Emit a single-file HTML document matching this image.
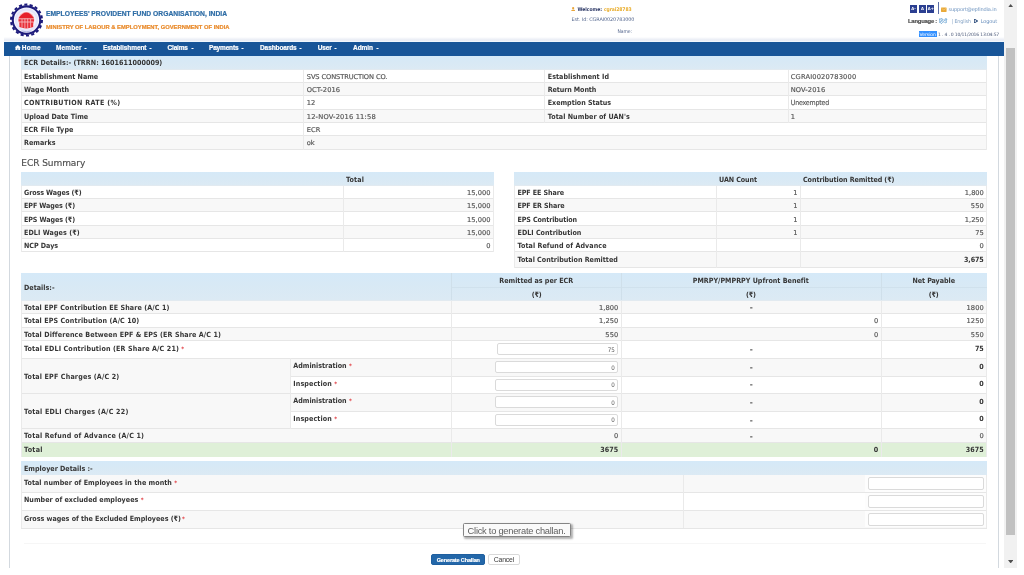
<!DOCTYPE html>
<html lang="en"><head><meta charset="utf-8"><title>EPFO - ECR Challan</title>
<style>
*{box-sizing:border-box;margin:0;padding:0}
html,body{width:1024px;height:575px;overflow:hidden;background:#fff}
body{position:relative;font-family:'DejaVu Sans Condensed','DejaVu Sans','Liberation Sans',sans-serif;font-size:7.1px;color:#333;line-height:12px}
div,svg,.t{position:absolute}
#page{left:0;top:0;width:1024px;height:575px;overflow:hidden;will-change:transform;transform:translateZ(0)}
.t{white-space:nowrap;line-height:12px;display:block}
.f{display:inline-block}
.rq{color:#e0393e;font-weight:bold;font-size:6px;margin-left:2.4px}
.inp{background:#fff;border:1px solid #dadada;border-radius:2px;font-size:5.9px;color:#555;text-align:right;line-height:10px;padding:0 2.6px 0 0;white-space:nowrap}
</style></head>
<body>
<div id="page">
<svg style="left:9px;top:3px" width="35" height="34" viewBox="0 0 35 34">
<circle cx="17.5" cy="17.1" r="15.5" fill="none" stroke="#1d1b7c" stroke-width="2" stroke-dasharray="3.1 2.31" stroke-linecap="butt"/>
<circle cx="17.5" cy="17.1" r="14.8" fill="#1d1b7c"/>
<circle cx="17.5" cy="17.1" r="12.7" fill="#fbfbff"/>
<circle cx="17.5" cy="17.1" r="11.8" fill="#e4e5fb"/>
<circle cx="17.5" cy="17.1" r="9.6" fill="#f5eff9"/>
<circle cx="17.3" cy="17" r="8" fill="#f4aeb2"/>
<path d="M9.6 15.3q7.7-11.6 15.4 0z" fill="#e61f2b"/>
<path d="M9.6 16.2h15.4v2.4H9.6zM10.4 19.6h13.8v4.4q-6.9 2.8-13.8 0z" fill="#e8313b"/>
<path d="M13 16v8.6M15.9 15.6v9.6M18.7 15.6v9.6M21.6 16v8.6" stroke="#f7bcc0" stroke-width="0.8" fill="none"/>
<path d="M12.6 28q4.9 1.5 9.8 0" stroke="#9aa0d8" stroke-width="0.7" fill="none"/>
</svg>
<span class="t" style="top:7.7px;left:46px;font-size:6.73px;font-weight:bold;-webkit-text-stroke:0.2px;color:#2d6ca5;font-family:'Liberation Sans','DejaVu Sans',sans-serif;"><span class="f" style="letter-spacing:0.008px;margin-right:-0.008px">EMPLOYEES&#x27; PROVIDENT FUND ORGANISATION, INDIA</span></span>
<span class="t" style="top:21.3px;left:46px;font-size:5.8px;font-weight:bold;-webkit-text-stroke:0.2px;color:#e98b2c;font-family:'Liberation Sans','DejaVu Sans',sans-serif;"><span class="f" style="letter-spacing:0.011px;margin-right:-0.011px">MINISTRY OF LABOUR &amp; EMPLOYMENT, GOVERNMENT OF INDIA</span></span>
<svg style="left:571px;top:6.9px" width="4.3" height="4.6" viewBox="0 0 43 46"><circle cx="21.5" cy="12" r="11" fill="#e9a53a"/><path d="M0 46q0-22 21.5-22T43 46z" fill="#e9a53a"/></svg>
<span class="t" style="top:3.1px;left:577.4px;font-size:5px;font-weight:bold;color:#2c3866;"><span class="f" style="letter-spacing:-0.012px;margin-right:0.012px">Welcome:</span></span>
<span class="t" style="top:3.1px;left:603.9px;font-size:5px;font-weight:bold;color:#e9ad2c;"><span class="f" style="letter-spacing:-0.072px;margin-right:0.072px">cgrai28783</span></span>
<span class="t" style="top:12.8px;left:571.6px;font-size:4.9px;color:#56688f;font-family:'DejaVu Sans','Liberation Sans',sans-serif;"><span class="f" style="letter-spacing:-0.084px;margin-right:0.084px">Est. Id: CGRAI0020783000</span></span>
<span class="t" style="top:24.9px;left:617.5px;font-size:5px;color:#56688f;"><span class="f" style="letter-spacing:-0.074px;margin-right:0.074px">Name:</span></span>
<div style="left:910px;top:5.4px;width:7px;height:7.2px;background:#2b3f91;"><span class="t" style="left:0;width:7px;top:-2.3px;text-align:center;color:#fff;font-weight:bold;font-size:4.2px">A-</span></div>
<div style="left:919px;top:5.4px;width:7px;height:7.2px;background:#2b3f91;"><span class="t" style="left:0;width:7px;top:-2.3px;text-align:center;color:#fff;font-weight:bold;font-size:4.2px">A</span></div>
<div style="left:927.4px;top:5.4px;width:7px;height:7.2px;background:#2b3f91;"><span class="t" style="left:0;width:7px;top:-2.3px;text-align:center;color:#fff;font-weight:bold;font-size:4.2px">A+</span></div>
<div style="left:938px;top:2px;width:1px;height:12px;background:#5d6fa8;"></div>
<svg style="left:941px;top:6.6px" width="5.6" height="5.4" viewBox="0 0 56 54"><rect x="0" y="4" width="56" height="46" rx="5" fill="#e9a937"/><path d="M4 12l24 18 24-18" stroke="#f6d79a" stroke-width="5" fill="none"/></svg>
<span class="t" style="top:3.1px;left:948.5px;font-size:5.05px;color:#6d93bf;font-family:'DejaVu Sans','Liberation Sans',sans-serif;"><span class="f" style="letter-spacing:-0.162px;margin-right:0.162px">support@epfindia.in</span></span>
<span class="t" style="top:14.6px;left:908px;font-size:5.9px;font-weight:bold;-webkit-text-stroke:0.2px;color:#505050;font-family:'Liberation Sans','DejaVu Sans',sans-serif;"><span class="f" style="letter-spacing:-0.236px;margin-right:0.236px">Language :</span></span>
<span class="t" style="top:14.6px;left:938.5px;font-size:5.4px;color:#3b86c4;font-family:'DejaVu Sans','Noto Sans CJK SC',sans-serif;">हिंदी</span>
<span class="t" style="top:14.8px;left:951.5px;font-size:5.2px;color:#7f9fc2;"><span class="f" style="letter-spacing:-0.053px;margin-right:0.053px">| English</span></span>
<svg style="left:973.5px;top:19px" width="4.5" height="4" viewBox="0 0 9 8"><path d="M0 0h4v1.5H1.5v5H4V8H0zM4.5 1.2L9 4 4.5 6.8V5H3V3h1.5z" fill="#2a4a7a"/></svg>
<span class="t" style="top:14.8px;left:980.7px;font-size:5px;color:#6a90bd;font-family:'DejaVu Sans','Liberation Sans',sans-serif;"><span class="f" style="letter-spacing:-0.105px;margin-right:0.105px">Logout</span></span>
<div style="left:919px;top:31px;width:17.6px;height:6.5px;background:#3390ff;"></div>
<span class="t" style="top:28.6px;left:919.6px;font-size:4.55px;color:#fff;font-family:'DejaVu Sans','Liberation Sans',sans-serif;"><span class="f" style="letter-spacing:-0.056px;margin-right:0.056px">Version</span></span>
<span class="t" style="top:28.6px;right:24.8px;font-size:4.55px;color:#4a5878;font-family:'DejaVu Sans','Liberation Sans',sans-serif;"><span class="f" style="letter-spacing:-0.203px;margin-right:0.203px">1 . 4 . 0 10/11/2016 13:04:57</span></span>
<div style="left:4px;top:37px;width:999.8px;height:4px;background:linear-gradient(#fff,#eceff6 60%,#eaedf5);"></div>
<div style="left:4px;top:41px;width:999.8px;height:1px;background:#f0f7fd;"></div>
<div style="left:4px;top:42px;width:999.8px;height:13.6px;background:#185598;"></div>
<svg style="left:15.4px;top:45.2px" width="5.6" height="5" viewBox="0 0 10 9"><path d="M5 0L0 4.3h1.1V9h3V6h1.8v3h3V4.3H10z" fill="#fff" stroke="#fff" stroke-width="0.5"/></svg>
<span class="t" style="top:41.7px;left:21.8px;font-size:6.5px;font-weight:bold;-webkit-text-stroke:0.2px;color:#fff;font-family:'Liberation Sans','DejaVu Sans',sans-serif;"><span class="f" style="letter-spacing:0.279px;margin-right:-0.279px">Home</span></span>
<span class="t" style="top:41.7px;left:56px;font-size:6.5px;font-weight:bold;-webkit-text-stroke:0.2px;color:#fff;font-family:'Liberation Sans','DejaVu Sans',sans-serif;"><span class="f" style="letter-spacing:0.113px;margin-right:-0.113px">Member</span></span>
<svg style="left:84.1px;top:47.6px" width="3" height="1.6" viewBox="0 0 6 3"><path d="M0 0h6L3 3z" fill="#fff"/></svg>
<span class="t" style="top:41.7px;left:103px;font-size:6.5px;font-weight:bold;-webkit-text-stroke:0.2px;color:#fff;font-family:'Liberation Sans','DejaVu Sans',sans-serif;"><span class="f" style="letter-spacing:-0.078px;margin-right:0.078px">Establishment</span></span>
<svg style="left:149.1px;top:47.6px" width="3" height="1.6" viewBox="0 0 6 3"><path d="M0 0h6L3 3z" fill="#fff"/></svg>
<span class="t" style="top:41.7px;left:167.5px;font-size:6.5px;font-weight:bold;-webkit-text-stroke:0.2px;color:#fff;font-family:'Liberation Sans','DejaVu Sans',sans-serif;"><span class="f" style="letter-spacing:-0.166px;margin-right:0.166px">Claims</span></span>
<svg style="left:190.6px;top:47.6px" width="3" height="1.6" viewBox="0 0 6 3"><path d="M0 0h6L3 3z" fill="#fff"/></svg>
<span class="t" style="top:41.7px;left:209px;font-size:6.5px;font-weight:bold;-webkit-text-stroke:0.2px;color:#fff;font-family:'Liberation Sans','DejaVu Sans',sans-serif;"><span class="f" style="letter-spacing:-0.174px;margin-right:0.174px">Payments</span></span>
<svg style="left:241.1px;top:47.6px" width="3" height="1.6" viewBox="0 0 6 3"><path d="M0 0h6L3 3z" fill="#fff"/></svg>
<span class="t" style="top:41.7px;left:260px;font-size:6.5px;font-weight:bold;-webkit-text-stroke:0.2px;color:#fff;font-family:'Liberation Sans','DejaVu Sans',sans-serif;"><span class="f" style="letter-spacing:-0.092px;margin-right:0.092px">Dashboards</span></span>
<svg style="left:299.35px;top:47.6px" width="3" height="1.6" viewBox="0 0 6 3"><path d="M0 0h6L3 3z" fill="#fff"/></svg>
<span class="t" style="top:41.7px;left:317.75px;font-size:6.5px;font-weight:bold;-webkit-text-stroke:0.2px;color:#fff;font-family:'Liberation Sans','DejaVu Sans',sans-serif;"><span class="f" style="letter-spacing:-0.156px;margin-right:0.156px">User</span></span>
<svg style="left:334.35px;top:47.6px" width="3" height="1.6" viewBox="0 0 6 3"><path d="M0 0h6L3 3z" fill="#fff"/></svg>
<span class="t" style="top:41.7px;left:353px;font-size:6.5px;font-weight:bold;-webkit-text-stroke:0.2px;color:#fff;font-family:'Liberation Sans','DejaVu Sans',sans-serif;"><span class="f" style="letter-spacing:-0.059px;margin-right:0.059px">Admin</span></span>
<svg style="left:375.6px;top:47.6px" width="3" height="1.6" viewBox="0 0 6 3"><path d="M0 0h6L3 3z" fill="#fff"/></svg>
<div style="left:9px;top:55.6px;width:1px;height:512px;background:#d3d9df;"></div>
<div style="left:998px;top:55.6px;width:1px;height:512px;background:#d3d9df;"></div>
<div style="left:21px;top:55.5px;width:965.5px;height:14px;background:linear-gradient(#d5e9f8,#d8e9f5 45%,#dceaf4);"></div>
<span class="t" style="top:56.9px;left:24px;font-weight:bold;color:#353535;"><span class="f" style="letter-spacing:0.049px;margin-right:-0.049px">ECR Details:- (TRRN: 1601611000009)</span></span>
<span class="t" style="top:71px;left:24px;font-weight:bold;color:#353535;"><span class="f" style="letter-spacing:-0.002px;margin-right:0.002px">Establishment Name</span></span>
<span class="t" style="top:71px;left:306.75px;font-size:6.7px;color:#525252;font-family:'DejaVu Sans','Liberation Sans',sans-serif;-webkit-text-stroke:0.15px;"><span class="f" style="letter-spacing:-0.116px;margin-right:0.116px">SVS CONSTRUCTION CO.</span></span>
<span class="t" style="top:71px;left:547.75px;font-weight:bold;color:#353535;"><span class="f" style="letter-spacing:0.044px;margin-right:-0.044px">Establishment Id</span></span>
<span class="t" style="top:71px;left:790.75px;font-size:6.7px;color:#525252;font-family:'DejaVu Sans','Liberation Sans',sans-serif;-webkit-text-stroke:0.15px;"><span class="f" style="letter-spacing:0.148px;margin-right:-0.148px">CGRAI0020783000</span></span>
<div style="left:21px;top:82.5px;width:965.5px;height:13px;background:#f8f8f8;"></div>
<span class="t" style="top:84px;left:24px;font-weight:bold;color:#353535;"><span class="f" style="letter-spacing:0.001px;margin-right:-0.001px">Wage Month</span></span>
<span class="t" style="top:84px;left:306.75px;font-size:6.7px;color:#525252;font-family:'DejaVu Sans','Liberation Sans',sans-serif;-webkit-text-stroke:0.15px;"><span class="f" style="letter-spacing:0.065px;margin-right:-0.065px">OCT-2016</span></span>
<span class="t" style="top:84px;left:547.75px;font-weight:bold;color:#353535;"><span class="f" style="letter-spacing:-0.095px;margin-right:0.095px">Return Month</span></span>
<span class="t" style="top:84px;left:790.75px;font-size:6.7px;color:#525252;font-family:'DejaVu Sans','Liberation Sans',sans-serif;-webkit-text-stroke:0.15px;"><span class="f" style="letter-spacing:0.091px;margin-right:-0.091px">NOV-2016</span></span>
<span class="t" style="top:97px;left:24px;font-weight:bold;color:#353535;"><span class="f" style="letter-spacing:0.344px;margin-right:-0.344px">CONTRIBUTION RATE (%)</span></span>
<span class="t" style="top:97px;left:306.75px;font-size:6.7px;color:#525252;font-family:'DejaVu Sans','Liberation Sans',sans-serif;-webkit-text-stroke:0.15px;">12</span>
<span class="t" style="top:97px;left:547.75px;font-weight:bold;color:#353535;"><span class="f" style="letter-spacing:-0.024px;margin-right:0.024px">Exemption Status</span></span>
<span class="t" style="top:97px;left:790.75px;font-size:7px;color:#525252;-webkit-text-stroke:0.12px;"><span class="f" style="letter-spacing:-0.204px;margin-right:0.204px">Unexempted</span></span>
<div style="left:21px;top:109.5px;width:965.5px;height:13px;background:#f8f8f8;"></div>
<span class="t" style="top:111px;left:24px;font-weight:bold;color:#353535;"><span class="f" style="letter-spacing:0.003px;margin-right:-0.003px">Upload Date Time</span></span>
<span class="t" style="top:111px;left:306.75px;font-size:6.7px;color:#525252;font-family:'DejaVu Sans','Liberation Sans',sans-serif;-webkit-text-stroke:0.15px;"><span class="f" style="letter-spacing:0.175px;margin-right:-0.175px">12-NOV-2016 11:58</span></span>
<span class="t" style="top:111px;left:547.75px;font-weight:bold;color:#353535;"><span class="f" style="letter-spacing:0.062px;margin-right:-0.062px">Total Number of UAN&#x27;s</span></span>
<span class="t" style="top:111px;left:790.75px;font-size:6.7px;color:#525252;font-family:'DejaVu Sans','Liberation Sans',sans-serif;-webkit-text-stroke:0.15px;">1</span>
<span class="t" style="top:124px;left:24px;font-weight:bold;color:#353535;"><span class="f" style="letter-spacing:0.114px;margin-right:-0.114px">ECR File Type</span></span>
<span class="t" style="top:124px;left:306.75px;font-size:6.7px;color:#525252;font-family:'DejaVu Sans','Liberation Sans',sans-serif;-webkit-text-stroke:0.15px;">ECR</span>
<div style="left:21px;top:135.5px;width:965.5px;height:14px;background:#f8f8f8;"></div>
<span class="t" style="top:137px;left:24px;font-weight:bold;color:#353535;"><span class="f" style="letter-spacing:0.032px;margin-right:-0.032px">Remarks</span></span>
<span class="t" style="top:137px;left:306.75px;font-size:6.7px;color:#525252;font-family:'DejaVu Sans','Liberation Sans',sans-serif;-webkit-text-stroke:0.15px;">ok</span>
<div style="left:21px;top:69px;width:965.5px;height:1px;background:#e2eaf0;"></div>
<div style="left:21px;top:82px;width:965.5px;height:1px;background:#e6e6e6;"></div>
<div style="left:21px;top:95px;width:965.5px;height:1px;background:#e6e6e6;"></div>
<div style="left:21px;top:109px;width:965.5px;height:1px;background:#e6e6e6;"></div>
<div style="left:21px;top:122px;width:965.5px;height:1px;background:#e6e6e6;"></div>
<div style="left:21px;top:135px;width:965.5px;height:1px;background:#e6e6e6;"></div>
<div style="left:21px;top:149px;width:965.5px;height:1px;background:#e6e6e6;"></div>
<div style="left:21px;top:69.5px;width:1px;height:80px;background:#eaeaea;"></div>
<div style="left:985.5px;top:69.5px;width:1px;height:80px;background:#eaeaea;"></div>
<div style="left:303px;top:69.5px;width:1px;height:80px;background:#eaeaea;"></div>
<div style="left:544px;top:69.5px;width:1px;height:53px;background:#eaeaea;"></div>
<div style="left:787.5px;top:69.5px;width:1px;height:53px;background:#eaeaea;"></div>
<span class="t" style="top:156.6px;left:21.3px;font-size:9px;color:#4c4c4c;font-family:'DejaVu Sans','Liberation Sans',sans-serif;-webkit-text-stroke:0.15px;"><span class="f" style="letter-spacing:-0.058px;margin-right:0.058px">ECR Summary</span></span>
<div style="left:21px;top:172px;width:472.5px;height:13.5px;background:linear-gradient(#d5e9f8,#d8e9f5 45%,#dceaf4);"></div>
<span class="t" style="top:174px;left:346px;font-weight:bold;color:#353535;"><span class="f" style="letter-spacing:0.164px;margin-right:-0.164px">Total</span></span>
<span class="t" style="top:187px;left:24px;font-weight:bold;color:#353535;"><span class="f" style="letter-spacing:-0.092px;margin-right:0.092px">Gross Wages (₹)</span></span>
<span class="t" style="top:187px;right:533.4px;font-size:6.7px;color:#525252;font-family:'DejaVu Sans','Liberation Sans',sans-serif;-webkit-text-stroke:0.15px;"><span class="f" style="letter-spacing:0.039px;margin-right:-0.039px">15,000</span></span>
<div style="left:21px;top:198.5px;width:472.5px;height:13px;background:#f8f8f8;"></div>
<span class="t" style="top:200px;left:24px;font-weight:bold;color:#353535;"><span class="f" style="letter-spacing:-0.067px;margin-right:0.067px">EPF Wages (₹)</span></span>
<span class="t" style="top:200px;right:533.4px;font-size:6.7px;color:#525252;font-family:'DejaVu Sans','Liberation Sans',sans-serif;-webkit-text-stroke:0.15px;"><span class="f" style="letter-spacing:0.039px;margin-right:-0.039px">15,000</span></span>
<span class="t" style="top:214px;left:24px;font-weight:bold;color:#353535;"><span class="f" style="letter-spacing:-0.087px;margin-right:0.087px">EPS Wages (₹)</span></span>
<span class="t" style="top:214px;right:533.4px;font-size:6.7px;color:#525252;font-family:'DejaVu Sans','Liberation Sans',sans-serif;-webkit-text-stroke:0.15px;"><span class="f" style="letter-spacing:0.039px;margin-right:-0.039px">15,000</span></span>
<div style="left:21px;top:225.5px;width:472.5px;height:13px;background:#f8f8f8;"></div>
<span class="t" style="top:227px;left:24px;font-weight:bold;color:#353535;"><span class="f" style="letter-spacing:0.076px;margin-right:-0.076px">EDLI Wages (₹)</span></span>
<span class="t" style="top:227px;right:533.4px;font-size:6.7px;color:#525252;font-family:'DejaVu Sans','Liberation Sans',sans-serif;-webkit-text-stroke:0.15px;"><span class="f" style="letter-spacing:0.039px;margin-right:-0.039px">15,000</span></span>
<span class="t" style="top:240px;left:24px;font-weight:bold;color:#353535;"><span class="f" style="letter-spacing:-0.026px;margin-right:0.026px">NCP Days</span></span>
<span class="t" style="top:240px;right:533.4px;font-size:6.7px;color:#525252;font-family:'DejaVu Sans','Liberation Sans',sans-serif;-webkit-text-stroke:0.15px;">0</span>
<div style="left:21px;top:185px;width:472.5px;height:1px;background:#e2eaf0;"></div>
<div style="left:21px;top:198px;width:472.5px;height:1px;background:#e6e6e6;"></div>
<div style="left:21px;top:211px;width:472.5px;height:1px;background:#e6e6e6;"></div>
<div style="left:21px;top:225px;width:472.5px;height:1px;background:#e6e6e6;"></div>
<div style="left:21px;top:238px;width:472.5px;height:1px;background:#e6e6e6;"></div>
<div style="left:21px;top:251px;width:472.5px;height:1px;background:#e6e6e6;"></div>
<div style="left:21px;top:186px;width:1px;height:66px;background:#eaeaea;"></div>
<div style="left:492.5px;top:186px;width:1px;height:66px;background:#eaeaea;"></div>
<div style="left:343px;top:186px;width:1px;height:66px;background:#eaeaea;"></div>
<div style="left:514px;top:172px;width:472.5px;height:13.5px;background:linear-gradient(#d5e9f8,#d8e9f5 45%,#dceaf4);"></div>
<span class="t" style="top:174px;left:719px;font-weight:bold;color:#353535;"><span class="f" style="letter-spacing:-0.073px;margin-right:0.073px">UAN Count</span></span>
<span class="t" style="top:174px;left:803px;font-weight:bold;color:#353535;"><span class="f" style="letter-spacing:-0.066px;margin-right:0.066px">Contribution Remitted (₹)</span></span>
<span class="t" style="top:187px;left:517.5px;font-weight:bold;color:#353535;"><span class="f" style="letter-spacing:-0.082px;margin-right:0.082px">EPF EE Share</span></span>
<span class="t" style="top:187px;right:226.4px;font-size:6.7px;color:#525252;font-family:'DejaVu Sans','Liberation Sans',sans-serif;-webkit-text-stroke:0.15px;">1</span>
<span class="t" style="top:187px;right:40.2px;font-size:6.7px;color:#525252;font-family:'DejaVu Sans','Liberation Sans',sans-serif;-webkit-text-stroke:0.15px;"><span class="f" style="letter-spacing:-0.039px;margin-right:0.039px">1,800</span></span>
<div style="left:514px;top:198.5px;width:472.5px;height:13px;background:#f8f8f8;"></div>
<span class="t" style="top:200px;left:517.5px;font-weight:bold;color:#353535;"><span class="f" style="letter-spacing:-0.086px;margin-right:0.086px">EPF ER Share</span></span>
<span class="t" style="top:200px;right:226.4px;font-size:6.7px;color:#525252;font-family:'DejaVu Sans','Liberation Sans',sans-serif;-webkit-text-stroke:0.15px;">1</span>
<span class="t" style="top:200px;right:40.2px;font-size:6.7px;color:#525252;font-family:'DejaVu Sans','Liberation Sans',sans-serif;-webkit-text-stroke:0.15px;"><span class="f" style="letter-spacing:0.117px;margin-right:-0.117px">550</span></span>
<span class="t" style="top:214px;left:517.5px;font-weight:bold;color:#353535;"><span class="f" style="letter-spacing:-0.103px;margin-right:0.103px">EPS Contribution</span></span>
<span class="t" style="top:214px;right:226.4px;font-size:6.7px;color:#525252;font-family:'DejaVu Sans','Liberation Sans',sans-serif;-webkit-text-stroke:0.15px;">1</span>
<span class="t" style="top:214px;right:40.2px;font-size:6.7px;color:#525252;font-family:'DejaVu Sans','Liberation Sans',sans-serif;-webkit-text-stroke:0.15px;"><span class="f" style="letter-spacing:-0.039px;margin-right:0.039px">1,250</span></span>
<div style="left:514px;top:225.5px;width:472.5px;height:13px;background:#f8f8f8;"></div>
<span class="t" style="top:227px;left:517.5px;font-weight:bold;color:#353535;"><span class="f" style="letter-spacing:0.018px;margin-right:-0.018px">EDLI Contribution</span></span>
<span class="t" style="top:227px;right:226.4px;font-size:6.7px;color:#525252;font-family:'DejaVu Sans','Liberation Sans',sans-serif;-webkit-text-stroke:0.15px;">1</span>
<span class="t" style="top:227px;right:40.2px;font-size:6.7px;color:#525252;font-family:'DejaVu Sans','Liberation Sans',sans-serif;-webkit-text-stroke:0.15px;">75</span>
<span class="t" style="top:240px;left:517.5px;font-weight:bold;color:#353535;"><span class="f" style="letter-spacing:0.070px;margin-right:-0.070px">Total Refund of Advance</span></span>
<span class="t" style="top:240px;right:40.2px;font-size:6.7px;color:#525252;font-family:'DejaVu Sans','Liberation Sans',sans-serif;-webkit-text-stroke:0.15px;">0</span>
<div style="left:514px;top:251.5px;width:472.5px;height:16px;background:#f8f8f8;"></div>
<span class="t" style="top:254px;left:517.5px;font-weight:bold;color:#353535;"><span class="f" style="letter-spacing:0.006px;margin-right:-0.006px">Total Contribution Remitted</span></span>
<span class="t" style="top:254px;right:40.2px;font-weight:bold;color:#353535;"><span class="f" style="letter-spacing:-0.097px;margin-right:0.097px">3,675</span></span>
<div style="left:514px;top:185px;width:472.5px;height:1px;background:#e2eaf0;"></div>
<div style="left:514px;top:198px;width:472.5px;height:1px;background:#e6e6e6;"></div>
<div style="left:514px;top:211px;width:472.5px;height:1px;background:#e6e6e6;"></div>
<div style="left:514px;top:225px;width:472.5px;height:1px;background:#e6e6e6;"></div>
<div style="left:514px;top:238px;width:472.5px;height:1px;background:#e6e6e6;"></div>
<div style="left:514px;top:251px;width:472.5px;height:1px;background:#e6e6e6;"></div>
<div style="left:514px;top:267px;width:472.5px;height:1px;background:#e6e6e6;"></div>
<div style="left:514px;top:186px;width:1px;height:81.5px;background:#eaeaea;"></div>
<div style="left:985.5px;top:186px;width:1px;height:81.5px;background:#eaeaea;"></div>
<div style="left:716px;top:186px;width:1px;height:81.5px;background:#eaeaea;"></div>
<div style="left:800px;top:186px;width:1px;height:81.5px;background:#eaeaea;"></div>
<div style="left:21px;top:273px;width:965.5px;height:27.5px;background:linear-gradient(#d5e9f8,#d8e9f5 45%,#dceaf4);"></div>
<span class="t" style="top:281.9px;left:24px;font-weight:bold;color:#353535;"><span class="f" style="letter-spacing:0.028px;margin-right:-0.028px">Details:-</span></span>
<span class="t" style="top:275px;left:386.2px;width:300px;text-align:center;font-weight:bold;color:#353535;"><span class="f" style="letter-spacing:-0.003px;margin-right:0.003px">Remitted as per ECR</span></span>
<span class="t" style="top:275px;left:600.8px;width:300px;text-align:center;font-weight:bold;color:#353535;"><span class="f" style="letter-spacing:0.017px;margin-right:-0.017px">PMRPY/PMPRPY Upfront Benefit</span></span>
<span class="t" style="top:275px;left:783.7px;width:300px;text-align:center;font-weight:bold;color:#353535;"><span class="f" style="letter-spacing:-0.048px;margin-right:0.048px">Net Payable</span></span>
<span class="t" style="top:289px;left:386.8px;width:300px;text-align:center;font-weight:bold;color:#353535;"><span class="f" style="letter-spacing:-0.141px;margin-right:0.141px">(₹)</span></span>
<span class="t" style="top:289px;left:601px;width:300px;text-align:center;font-weight:bold;color:#353535;"><span class="f" style="letter-spacing:-0.141px;margin-right:0.141px">(₹)</span></span>
<span class="t" style="top:289px;left:783.8px;width:300px;text-align:center;font-weight:bold;color:#353535;"><span class="f" style="letter-spacing:-0.141px;margin-right:0.141px">(₹)</span></span>
<div style="left:451.5px;top:286.5px;width:535px;height:1px;background:#d0e1ed;"></div>
<div style="left:451px;top:273px;width:1px;height:27.5px;background:#cfdfea;"></div>
<div style="left:620.5px;top:273px;width:1px;height:27.5px;background:#cfdfea;"></div>
<div style="left:880.5px;top:273px;width:1px;height:27.5px;background:#cfdfea;"></div>
<div style="left:21px;top:300.5px;width:965.5px;height:13.33px;background:#f8f8f8;"></div>
<div style="left:21px;top:327.17px;width:965.5px;height:13.33px;background:#f8f8f8;"></div>
<div style="left:21px;top:358px;width:965.5px;height:18.25px;background:#f8f8f8;"></div>
<div style="left:21px;top:393.25px;width:965.5px;height:18px;background:#f8f8f8;"></div>
<div style="left:21px;top:428.75px;width:965.5px;height:13.25px;background:#f8f8f8;"></div>
<div style="left:21px;top:442px;width:965.5px;height:14.5px;background:#dff0d8;"></div>
<div style="left:21px;top:376.25px;width:269.25px;height:17px;background:#f8f8f8;"></div>
<div style="left:21px;top:411.25px;width:269.25px;height:17.5px;background:#f8f8f8;"></div>
<span class="t" style="top:301.87px;left:24px;font-weight:bold;color:#353535;"><span class="f" style="letter-spacing:0.110px;margin-right:-0.110px">Total EPF Contribution EE Share (A/C 1)</span></span>
<span class="t" style="top:301.87px;right:405.7px;font-size:6.7px;color:#525252;font-family:'DejaVu Sans','Liberation Sans',sans-serif;-webkit-text-stroke:0.15px;"><span class="f" style="letter-spacing:0.036px;margin-right:-0.036px">1,800</span></span>
<span class="t" style="top:302.46px;left:601.2px;width:300px;text-align:center;font-size:7.4px;font-weight:bold;color:#484848;font-family:'DejaVu Sans','Liberation Sans',sans-serif;">-</span>
<span class="t" style="top:301.87px;right:40.2px;font-size:6.7px;color:#525252;font-family:'DejaVu Sans','Liberation Sans',sans-serif;-webkit-text-stroke:0.15px;"><span class="f" style="letter-spacing:0.090px;margin-right:-0.090px">1800</span></span>
<span class="t" style="top:315.2px;left:24px;font-weight:bold;color:#353535;"><span class="f" style="letter-spacing:0.116px;margin-right:-0.116px">Total EPS Contribution (A/C 10)</span></span>
<span class="t" style="top:315.2px;right:405.7px;font-size:6.7px;color:#525252;font-family:'DejaVu Sans','Liberation Sans',sans-serif;-webkit-text-stroke:0.15px;"><span class="f" style="letter-spacing:0.036px;margin-right:-0.036px">1,250</span></span>
<span class="t" style="top:315.2px;right:145.7px;font-size:6.7px;color:#525252;font-family:'DejaVu Sans','Liberation Sans',sans-serif;-webkit-text-stroke:0.15px;">0</span>
<span class="t" style="top:315.2px;right:40.2px;font-size:6.7px;color:#525252;font-family:'DejaVu Sans','Liberation Sans',sans-serif;-webkit-text-stroke:0.15px;"><span class="f" style="letter-spacing:0.090px;margin-right:-0.090px">1250</span></span>
<span class="t" style="top:328.54px;left:24px;font-weight:bold;color:#353535;"><span class="f" style="letter-spacing:0.114px;margin-right:-0.114px">Total Difference Between EPF &amp; EPS (ER Share A/C 1)</span></span>
<span class="t" style="top:328.54px;right:405.7px;font-size:6.7px;color:#525252;font-family:'DejaVu Sans','Liberation Sans',sans-serif;-webkit-text-stroke:0.15px;"><span class="f" style="letter-spacing:0.117px;margin-right:-0.117px">550</span></span>
<span class="t" style="top:328.54px;right:145.7px;font-size:6.7px;color:#525252;font-family:'DejaVu Sans','Liberation Sans',sans-serif;-webkit-text-stroke:0.15px;">0</span>
<span class="t" style="top:328.54px;right:40.2px;font-size:6.7px;color:#525252;font-family:'DejaVu Sans','Liberation Sans',sans-serif;-webkit-text-stroke:0.15px;"><span class="f" style="letter-spacing:0.117px;margin-right:-0.117px">550</span></span>
<div class="inp" style="left:496.7px;top:343.45px;width:121.3px;height:11.6px"></div>
<span class="t" style="top:343.65px;right:409.1px;font-size:6.2px;color:#5a5a5a;">75</span>
<span class="t" style="top:342.65px;left:24px;font-weight:bold;color:#353535;"><span class="f" style="letter-spacing:0.150px;margin-right:-0.150px">Total EDLI Contribution (ER Share A/C 21)</span><b class="rq">*</b></span>
<span class="t" style="top:343.95px;left:601.2px;width:300px;text-align:center;font-size:7.4px;font-weight:bold;color:#484848;font-family:'DejaVu Sans','Liberation Sans',sans-serif;">-</span>
<span class="t" style="top:342.65px;right:40.2px;font-weight:bold;color:#353535;">75</span>
<div class="inp" style="left:495.3px;top:361.33px;width:122.7px;height:11.6px"></div>
<span class="t" style="top:361.53px;right:409.1px;font-size:6.2px;color:#5a5a5a;">0</span>
<span class="t" style="top:370.5px;left:24px;font-weight:bold;color:#353535;"><span class="f" style="letter-spacing:0.165px;margin-right:-0.165px">Total EPF Charges (A/C 2)</span></span>
<span class="t" style="top:360.33px;left:293.25px;font-weight:bold;color:#353535;"><span class="f" style="letter-spacing:-0.011px;margin-right:0.011px">Administration</span><b class="rq">*</b></span>
<span class="t" style="top:361.82px;left:601.2px;width:300px;text-align:center;font-size:7.4px;font-weight:bold;color:#484848;font-family:'DejaVu Sans','Liberation Sans',sans-serif;">-</span>
<span class="t" style="top:360.53px;right:40.2px;font-weight:bold;color:#353535;">0</span>
<div class="inp" style="left:495.3px;top:378.95px;width:122.7px;height:11.6px"></div>
<span class="t" style="top:379.15px;right:409.1px;font-size:6.2px;color:#5a5a5a;">0</span>
<span class="t" style="top:377.95px;left:293.25px;font-weight:bold;color:#353535;"><span class="f" style="letter-spacing:0.114px;margin-right:-0.114px">Inspection</span><b class="rq">*</b></span>
<span class="t" style="top:379.45px;left:601.2px;width:300px;text-align:center;font-size:7.4px;font-weight:bold;color:#484848;font-family:'DejaVu Sans','Liberation Sans',sans-serif;">-</span>
<span class="t" style="top:378.15px;right:40.2px;font-weight:bold;color:#353535;">0</span>
<div class="inp" style="left:495.3px;top:396.45px;width:122.7px;height:11.6px"></div>
<span class="t" style="top:396.65px;right:409.1px;font-size:6.2px;color:#5a5a5a;">0</span>
<span class="t" style="top:406.2px;left:24px;font-weight:bold;color:#353535;"><span class="f" style="letter-spacing:0.228px;margin-right:-0.228px">Total EDLI Charges (A/C 22)</span></span>
<span class="t" style="top:395.45px;left:293.25px;font-weight:bold;color:#353535;"><span class="f" style="letter-spacing:-0.011px;margin-right:0.011px">Administration</span><b class="rq">*</b></span>
<span class="t" style="top:396.95px;left:601.2px;width:300px;text-align:center;font-size:7.4px;font-weight:bold;color:#484848;font-family:'DejaVu Sans','Liberation Sans',sans-serif;">-</span>
<span class="t" style="top:395.65px;right:40.2px;font-weight:bold;color:#353535;">0</span>
<div class="inp" style="left:495.3px;top:414.2px;width:122.7px;height:11.6px"></div>
<span class="t" style="top:414.4px;right:409.1px;font-size:6.2px;color:#5a5a5a;">0</span>
<span class="t" style="top:413.2px;left:293.25px;font-weight:bold;color:#353535;"><span class="f" style="letter-spacing:0.114px;margin-right:-0.114px">Inspection</span><b class="rq">*</b></span>
<span class="t" style="top:414.7px;left:601.2px;width:300px;text-align:center;font-size:7.4px;font-weight:bold;color:#484848;font-family:'DejaVu Sans','Liberation Sans',sans-serif;">-</span>
<span class="t" style="top:413.4px;right:40.2px;font-weight:bold;color:#353535;">0</span>
<span class="t" style="top:430.08px;left:24px;font-weight:bold;color:#353535;"><span class="f" style="letter-spacing:0.195px;margin-right:-0.195px">Total Refund of Advance (A/C 1)</span></span>
<span class="t" style="top:430.08px;right:405.7px;font-size:6.7px;color:#525252;font-family:'DejaVu Sans','Liberation Sans',sans-serif;-webkit-text-stroke:0.15px;">0</span>
<span class="t" style="top:430.68px;left:601.2px;width:300px;text-align:center;font-size:7.4px;font-weight:bold;color:#484848;font-family:'DejaVu Sans','Liberation Sans',sans-serif;">-</span>
<span class="t" style="top:430.08px;right:40.2px;font-size:6.7px;color:#525252;font-family:'DejaVu Sans','Liberation Sans',sans-serif;-webkit-text-stroke:0.15px;">0</span>
<span class="t" style="top:443.95px;left:24px;font-weight:bold;color:#353535;"><span class="f" style="letter-spacing:0.289px;margin-right:-0.289px">Total</span></span>
<span class="t" style="top:443.95px;right:405.7px;font-weight:bold;color:#353535;"><span class="f" style="letter-spacing:0.078px;margin-right:-0.078px">3675</span></span>
<span class="t" style="top:443.95px;right:145.7px;font-weight:bold;color:#353535;">0</span>
<span class="t" style="top:443.95px;right:40.2px;font-weight:bold;color:#353535;"><span class="f" style="letter-spacing:0.078px;margin-right:-0.078px">3675</span></span>
<div style="left:21px;top:300px;width:965.5px;height:1px;background:#e2eaf0;"></div>
<div style="left:21px;top:313.33px;width:965.5px;height:1px;background:#e6e6e6;"></div>
<div style="left:21px;top:326.67px;width:965.5px;height:1px;background:#e6e6e6;"></div>
<div style="left:21px;top:340px;width:965.5px;height:1px;background:#e6e6e6;"></div>
<div style="left:21px;top:357.5px;width:965.5px;height:1px;background:#e6e6e6;"></div>
<div style="left:290.25px;top:375.75px;width:696.25px;height:1px;background:#e6e6e6;"></div>
<div style="left:21px;top:392.75px;width:965.5px;height:1px;background:#e6e6e6;"></div>
<div style="left:290.25px;top:410.75px;width:696.25px;height:1px;background:#e6e6e6;"></div>
<div style="left:21px;top:428.25px;width:965.5px;height:1px;background:#e6e6e6;"></div>
<div style="left:21px;top:441.5px;width:965.5px;height:1px;background:#e6e6e6;"></div>
<div style="left:21px;top:300.5px;width:1px;height:156px;background:#eaeaea;"></div>
<div style="left:985.5px;top:300.5px;width:1px;height:156px;background:#eaeaea;"></div>
<div style="left:451px;top:300.5px;width:1px;height:156px;background:#eaeaea;"></div>
<div style="left:620.5px;top:300.5px;width:1px;height:156px;background:#eaeaea;"></div>
<div style="left:880.5px;top:300.5px;width:1px;height:156px;background:#eaeaea;"></div>
<div style="left:289.75px;top:358px;width:1px;height:70.75px;background:#eaeaea;"></div>
<div style="left:21px;top:461px;width:965.5px;height:13.75px;background:linear-gradient(#d5e9f8,#d8e9f5 45%,#dceaf4);"></div>
<span class="t" style="top:463px;left:24px;font-weight:bold;color:#353535;"><span class="f" style="letter-spacing:0.006px;margin-right:-0.006px">Employer Details :-</span></span>
<div style="left:21px;top:474.75px;width:965.5px;height:17.5px;background:#f8f8f8;"></div>
<span class="t" style="top:476.7px;left:24px;font-weight:bold;color:#353535;"><span class="f" style="letter-spacing:0.045px;margin-right:-0.045px">Total number of Employees in the month</span><b class="rq">*</b></span>
<div style="left:865px;top:475.35px;width:120.5px;height:16.3px;background:#fdfdfd;"></div>
<div class="inp" style="left:868px;top:477px;width:115.6px;height:13px"></div>
<span class="t" style="top:494.2px;left:24px;font-weight:bold;color:#353535;"><span class="f" style="letter-spacing:0.027px;margin-right:-0.027px">Number of excluded employees</span><b class="rq">*</b></span>
<div style="left:865px;top:492.85px;width:120.5px;height:16.8px;background:#fdfdfd;"></div>
<div class="inp" style="left:868px;top:495px;width:115.6px;height:13px"></div>
<div style="left:21px;top:510.25px;width:965.5px;height:17.75px;background:#f8f8f8;"></div>
<span class="t" style="top:512.8px;left:24px;font-weight:bold;color:#353535;"><span class="f" style="letter-spacing:-0.007px;margin-right:0.007px">Gross wages of the Excluded Employees (₹)</span><b class="rq" style="margin-left:1.1px">*</b></span>
<div style="left:865px;top:510.85px;width:120.5px;height:16.55px;background:#fdfdfd;"></div>
<div class="inp" style="left:868px;top:513px;width:115.6px;height:13px"></div>
<div style="left:21px;top:491.75px;width:965.5px;height:1px;background:#e6e6e6;"></div>
<div style="left:21px;top:509.75px;width:965.5px;height:1px;background:#e6e6e6;"></div>
<div style="left:21px;top:527.5px;width:965.5px;height:1px;background:#e6e6e6;"></div>
<div style="left:21px;top:474.75px;width:1px;height:53.25px;background:#eaeaea;"></div>
<div style="left:985.5px;top:474.75px;width:1px;height:53.25px;background:#eaeaea;"></div>
<div style="left:682.5px;top:474.75px;width:1px;height:53.25px;background:#eaeaea;"></div>
<div style="left:24px;top:542.5px;width:962px;height:1px;background:#f6f6f6;"></div>
<div style="left:430.8px;top:554.4px;width:54px;height:11px;background:#2367a9;border:1px solid #1f5f9f;border-radius:2px"></div>
<span class="t" style="top:554px;left:308.3px;width:300px;text-align:center;font-size:5.5px;font-weight:bold;-webkit-text-stroke:0.2px;color:#fff;font-family:'Liberation Sans','DejaVu Sans',sans-serif;"><span class="f" style="letter-spacing:-0.130px;margin-right:0.130px">Generate Challan</span></span>
<div style="left:487.6px;top:554.4px;width:32px;height:11px;background:#fff;border:1px solid #d9d9d9;border-radius:2px"></div>
<span class="t" style="top:554px;left:354px;width:300px;text-align:center;font-size:6.9px;color:#3a3a3a;font-family:'Liberation Sans','DejaVu Sans',sans-serif;"><span class="f" style="letter-spacing:-0.191px;margin-right:0.191px">Cancel</span></span>
<div style="left:463px;top:523.4px;width:108px;height:14px;background:#fafafa;border:1px solid #858585;border-radius:1.5px;box-shadow:1.5px 1.5px 2px rgba(0,0,0,.3)"></div>
<span class="t" style="top:525px;left:467.6px;font-size:9.3px;color:#606060;font-family:'Liberation Sans','DejaVu Sans',sans-serif;"><span class="f" style="letter-spacing:-0.248px;margin-right:0.248px">Click to generate challan.</span></span>
<div style="left:1004.4px;top:0px;width:12.6px;height:568px;background:#f1f1f1;"></div>
<div style="left:1006px;top:47.5px;width:9px;height:487.5px;background:#c1c1c1;"></div>
<svg style="left:1007.8px;top:4px" width="5.4" height="3.4" viewBox="0 0 8 5"><path d="M0 5L4 0l4 5z" fill="#505050"/></svg>
<svg style="left:1007.8px;top:560px" width="5.4" height="3.4" viewBox="0 0 8 5"><path d="M0 0h8L4 5z" fill="#505050"/></svg>
</div>
</body></html>
